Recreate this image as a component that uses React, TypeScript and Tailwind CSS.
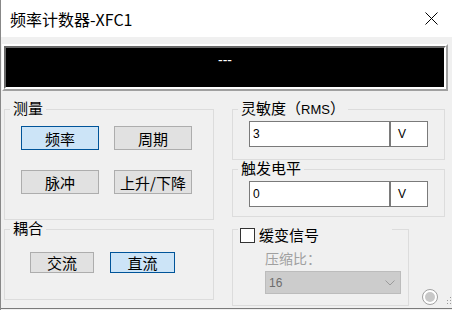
import React from 'react';

const btnBase = 'flex items-center justify-center text-[15px] leading-none text-black border';
const btnNormal = `${btnBase} bg-[#e1e1e1] border-[#adadad]`;
const btnActive = `${btnBase} bg-[#cce4f7] border-[#005499]`;

const Group: React.FC<{ label: React.ReactNode; className?: string; children?: React.ReactNode }> = ({ label, className = '', children }) => (
    <div className={`relative border border-[#dcdcdc] ${className}`}>
        <span className="absolute left-[5px] top-[-10px] bg-[#f0f0f0] px-[3px] text-[15px] leading-[16px] text-black">
            {label}
        </span>
        {children}
    </div>
);

const ValueInput: React.FC<{ value: string }> = ({ value }) => (
    <div className="flex h-[26px]">
        <div className="w-[141px] h-full bg-white border border-[#7a7a7a] flex items-center pl-[3px] font-['Liberation_Sans',sans-serif] text-[12px] text-black">
            {value}
        </div>
        <div className="w-[38px] h-full bg-white border border-[#7a7a7a] flex items-start pt-[5px] pl-[7px] font-['Liberation_Sans',sans-serif] text-[12px] leading-[14px] text-black">
            V
        </div>
    </div>
);

export default function App() {
    return (
        <div className="relative w-[452px] h-[310px] overflow-hidden bg-[#f0f0f0] border-l border-[#888888] font-['Noto_Sans_CJK_SC','Liberation_Sans',sans-serif]">
            {/* title bar */}
            <div className="h-[37px] bg-white flex items-center justify-between pl-[9px] pr-[14px]">
                <span className="text-[16px] leading-[20px] text-black">频率计数器-XFC1</span>
                <svg width="13" height="13" viewBox="0 0 13 13">
                    <path d="M0.5 0.5 L12.5 12.5 M12.5 0.5 L0.5 12.5" stroke="#000" strokeWidth="1" fill="none" />
                </svg>
            </div>

            {/* display */}
            <div className="mt-[7px] ml-[1px] w-[446px] h-[47px] border-2 border-t-white border-l-white border-b-[#a0a0a0] border-r-[#a0a0a0]">
                <div className="h-full border-2 border-t-[#696969] border-l-[#696969] border-b-white border-r-white bg-black flex justify-center pt-[4px]">
                    <span className="text-white text-[14px] leading-[16px] font-['Liberation_Sans',sans-serif]">---</span>
                </div>
            </div>

            <div className="flex mt-[18px]">
                {/* left column */}
                <div className="ml-[3px] w-[210px] flex flex-col">
                    <Group label="测量" className="h-[111px]">
                        <div className="grid grid-cols-[78px_78px] auto-rows-[24px] gap-x-[15px] gap-y-[20px] pl-[16px] pt-[16px]">
                            <div className={btnActive}>频率</div>
                            <div className={btnNormal}>周期</div>
                            <div className={btnNormal}>脉冲</div>
                            <div className={btnNormal}>上升/下降</div>
                        </div>
                    </Group>
                    <Group label="耦合" className="mt-[9px] h-[71px]">
                        <div className="flex gap-[16px] pl-[25px] pt-[22px]">
                            <div className={`${btnNormal} w-[64px] h-[21px]`}>交流</div>
                            <div className={`${btnActive} w-[65px] h-[21px]`}>直流</div>
                        </div>
                    </Group>
                </div>

                {/* right column */}
                <div className="ml-[18px] w-[213px] flex flex-col">
                    <Group label={<>灵敏度（<span className="font-['Liberation_Sans',sans-serif] text-[13px]">RMS</span>）</>} className="h-[51px]">
                        <div className="pl-[16px] pt-[11px]">
                            <ValueInput value="3" />
                        </div>
                    </Group>
                    <Group label="触发电平" className="mt-[9px] h-[48px]">
                        <div className="pl-[16px] pt-[11px]">
                            <ValueInput value="0" />
                        </div>
                    </Group>
                    <div className="flex mt-[12px]">
                        <div className="relative w-[177px] h-[77px] border border-[#dcdcdc]">
                            <div className="absolute left-[5px] top-[-3px] w-[154px] h-[16px] bg-[#f0f0f0] flex items-center gap-[4px] pl-[2px]">
                                <span className="w-[15px] h-[15px] bg-white border border-[#333333]" />
                                <span className="text-[15px] leading-[16px] text-black">缓变信号</span>
                            </div>
                            <div className="pl-[32px] pt-[20px]">
                                <div className="text-[14px] leading-[16px] text-[#a0a0a0]">压缩比：</div>
                                <div className="mt-[5px] w-[136px] h-[23px] bg-[#cccccc] border border-[#bcbcbc] flex items-center justify-between pl-[3px] pr-[5px]">
                                    <span className="font-['Liberation_Sans',sans-serif] text-[12px] text-[#6d6d6d]">16</span>
                                    <svg width="10" height="6" viewBox="0 0 10 6">
                                        <path d="M0.5 0.5 L5 5 L9.5 0.5" stroke="#9a9a9a" strokeWidth="1" fill="none" />
                                    </svg>
                                </div>
                            </div>
                        </div>
                        <div className="self-end ml-[13px] mb-[1px] w-[16px] h-[16px] rounded-full border border-[#a0a0a0] bg-white p-[2px]">
                            <div className="w-full h-full rounded-full bg-[#c8c8c8]" />
                        </div>
                    </div>
                </div>
            </div>

            {/* size grip */}
            <svg width="6" height="9" viewBox="0 0 6 9" className="absolute right-0 bottom-[4px]">
                <rect x="4" y="0" width="1" height="1" fill="#9a9a9a" />
                <rect x="4" y="3" width="1" height="1" fill="#9a9a9a" />
                <rect x="1" y="3" width="1" height="1" fill="#9a9a9a" />
                <rect x="4" y="6" width="1" height="1" fill="#9a9a9a" />
                <rect x="1" y="6" width="1" height="1" fill="#9a9a9a" />
            </svg>

            {/* bottom edge */}
            <div className="absolute left-0 right-0 bottom-[1px] h-[1px] bg-[#7a7a7a]" />
        </div>
    );
}
